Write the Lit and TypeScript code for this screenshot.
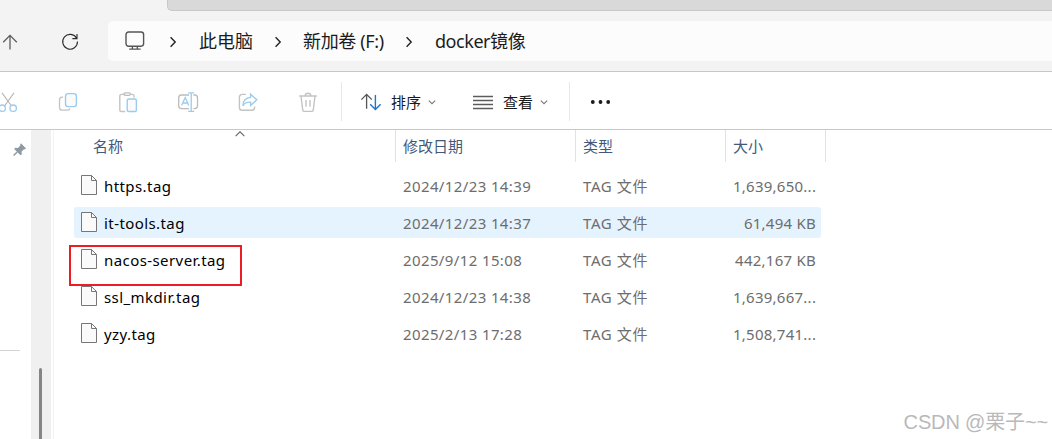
import { html, css, svg, LitElement } from 'lit'
import { customElement, property } from 'lit/decorators.js'
import { classMap } from 'lit/directives/class-map.js'

interface FileEntry {
  name: string
  date: string
  type: string
  size: string
  hover?: boolean
  marked?: boolean
}

const files: FileEntry[] = [
  { name: 'https.tag', date: '2024/12/23 14:39', type: 'TAG 文件', size: '1,639,650...' },
  { name: 'it-tools.tag', date: '2024/12/23 14:37', type: 'TAG 文件', size: '61,494 KB', hover: true },
  { name: 'nacos-server.tag', date: '2025/9/12 15:08', type: 'TAG 文件', size: '442,167 KB', marked: true },
  { name: 'ssl_mkdir.tag', date: '2024/12/23 14:38', type: 'TAG 文件', size: '1,639,667...' },
  { name: 'yzy.tag', date: '2025/2/13 17:28', type: 'TAG 文件', size: '1,508,741...' }
]

// all icons share a 20x20 box unless the component scales them
const icons: Record<string, unknown> = {
  up: svg`<path d="M10 17.5V3.5M3.2 10.2 10 3.4l6.8 6.8" stroke="#5c5c5c" stroke-width="1.3"/>`,
  refresh: svg`<path d="M16.6 7.2A7.4 7.4 0 1 0 17.5 10.6M17 3v4.6h-4.6" stroke="#2a2a2a" stroke-width="1.1"/>`,
  monitor: svg`<rect x="1" y="1" width="17.6" height="14.2" rx="2.6" stroke="#555" stroke-width="1.4"/><path d="M7.4 15.6v2.2M12.3 15.6v2.2M4.2 18.2h11.4" stroke="#555" stroke-width="1.3"/>`,
  cut: svg`<path d="M4 .8 13.2 13.6M16 .8 6.8 13.6" stroke="#bcbcbc" stroke-width="1.2"/><circle cx="4.2" cy="16.2" r="3.2" stroke="#9bcbee" stroke-width="1.3"/><circle cx="15.2" cy="16.2" r="3.2" stroke="#9bcbee" stroke-width="1.3"/>`,
  copy: svg`<path d="M5.2 5.2H4A2.8 2.8 0 0 0 1.5 8v7.4A2.8 2.8 0 0 0 4.2 18.2h5A2.8 2.8 0 0 0 12 16.4" stroke="#c4c4c4" stroke-width="1.3"/><rect x="7.5" y="1.6" width="10.9" height="13" rx="2.6" fill="#fbfbfb" stroke="#9bcbee" stroke-width="1.4"/>`,
  paste: svg`<path d="M6.5 2.4H3.4A1.6 1.6 0 0 0 1.8 4v14A1.5 1.5 0 0 0 3.3 19.5H7.2M12.4 2.4h2A1.6 1.6 0 0 1 16 4v1.6" stroke="#c4c4c4" stroke-width="1.4"/><rect x="6" y=".8" width="6.4" height="2.6" rx="1.3" stroke="#bcbcbc" stroke-width="1.2"/><rect x="9.2" y="7" width="9.2" height="12.5" rx="1.6" fill="#fbfbfb" stroke="#9bcbee" stroke-width="1.4"/>`,
  rename: svg`<path d="M11 3H3.4A2.8 2.8 0 0 0 .7 5.8v8A2.8 2.8 0 0 0 3.4 16.6H11M15.4 3h1.4a2.8 2.8 0 0 1 2.7 2.8v8a2.8 2.8 0 0 1-2.7 2.8h-1.4" stroke="#bcbcbc" stroke-width="1.3"/><path d="M13.2.8v18.6M10.2.8h6M10.2 19.3h6M3.6 13.6 7.2 5.6l3.6 8M4.8 11h4.8" stroke="#9bcbee" stroke-width="1.3"/>`,
  share: svg`<path d="M8 2.4H4.2A2.8 2.8 0 0 0 1.4 5.2v10.2a2.8 2.8 0 0 0 2.8 2.8h9.6a2.8 2.8 0 0 0 2.8-2.8v-1" stroke="#c4c4c4" stroke-width="1.4"/><path d="M12.6 2.2 18.8 7.8l-6.2 5.6v-3.2C8.6 9.9 6.4 11.3 4.9 13.8 5.1 9 7.6 5.8 12.6 5.4Z" stroke="#9bcbee" stroke-width="1.4"/>`,
  trash: svg`<path d="M1.2 4h17.6M3 4l1.7 13.8a1.8 1.8 0 0 0 1.8 1.6h7a1.8 1.8 0 0 0 1.8-1.6L17 4M7.2 3.8a2.8 2.6 0 0 1 5.6 0M8 8v6.8M12 8v6.8" stroke="#c4c4c4" stroke-width="1.4"/>`,
  sort: svg`<path d="M5.6 16.8V2.6M.4 7.6 5.6 2.4l5.2 5.2" stroke="#555" stroke-width="1.3"/><path d="M14.4 3v14.2M9.2 12.2l5.2 5.2 5.2-5.2" stroke="#1978ca" stroke-width="1.4"/>`,
  list: svg`<path d="M0 4.5h20M0 8.5h20M0 12.5h20M0 16.5h20" stroke="#5c5c5c" stroke-width="1.3"/>`,
  next: svg`<path d="M7.6 5.2 12.2 10l-4.6 4.8" stroke="#222" stroke-width="1.4"/>`,
  down: svg`<path d="M6.8 8.6 10 11.7l3.2-3.1" stroke="#7a7a7a" stroke-width="1.1"/>`,
  more: svg`<g fill="#1b1b1b"><circle cx="2.8" cy="10" r="1.9"/><circle cx="10.5" cy="10" r="1.9"/><circle cx="18.2" cy="10" r="1.9"/></g>`,
  caret: svg`<path d="M5.6 12.2 10 7.8l4.4 4.4" stroke="#666" stroke-width="1.1"/>`,
  file: svg`<path d="M2.5.5H12.5L17.5 5.5V19.5H2.5Z" fill="#fafafa" stroke="#767676"/><path d="M12.5.5V5.5H17.5" stroke="#767676"/>`,
  pin: svg`<path d="M11.2 2.6 17.6 9l-1.2 1.2-1.4-.2-3 3 .2 3.2-1.5 1.5-8-8 1.5-1.5 3.2.2 3-3-.2-1.4Z" fill="#8d99a3" transform="translate(0 -1)"/><path d="M6.6 12.4 2 17" stroke="#8d99a3" stroke-width="1.8"/>`
}

@customElement('fe-icon')
export class FeIcon extends LitElement {
  static styles = css`
    :host {
      display: block;
      flex: none;
      width: 20px;
      height: 20px;
    }

    .glyph {
      display: block;
      width: 100%;
      height: 100%;
      fill: none;
      overflow: visible;
    }
  `

  @property() name = ''

  render () {
    return html`<svg class="glyph" viewBox="0 0 20 20">${icons[this.name]}</svg>`
  }
}

@customElement('address-bar')
export class AddressBar extends LitElement {
  static styles = css`
    :host {
      display: block;
      box-sizing: border-box;
      height: 72px;
      background: #f3f3f3;
      border-bottom: 1px solid #c8c8c8;
    }

    .tab {
      box-sizing: border-box;
      height: 11px;
      margin-left: 167px;
      background: #d9d9d9;
      border: solid #c8c8c8;
      border-width: 0 0 1px 1px;
      border-bottom-left-radius: 5px;
    }

    .nav {
      display: flex;
      align-items: center;
      height: 40px;
      margin-top: 10px;
    }

    .refresh {
      margin: 0 28px 0 40px;
    }

    .path {
      display: flex;
      flex: 1;
      align-items: center;
      height: 40px;
      padding-left: 17px;
      background: #fcfcfc;
      border-radius: 5px 0 0 5px;
      color: #1b1b1b;
      font-size: 18px;
      line-height: 24px;
      white-space: nowrap;
    }

    .monitor {
      margin-bottom: 1px;
    }

    .next {
      margin: 1px 17px 0 18px;
    }

    .crumb {
      width: 54px;
      margin-left: -1px;
    }

    .drive {
      width: 81px;
      letter-spacing: -.35px;
    }

    .folder {
      letter-spacing: -.45px;
    }

    .next.tight {
      margin: 1px 15px 0;
    }

    .next.last {
      margin: 1px 16px 0 15px;
    }

    .up {
      margin-top: 1px;
    }
  `

  render () {
    return html`
      <div class="tab"></div>
      <div class="nav">
        <fe-icon class="up" name="up"></fe-icon>
        <fe-icon class="refresh" name="refresh"></fe-icon>
        <div class="path">
          <fe-icon class="monitor" name="monitor"></fe-icon>
          <fe-icon class="next" name="next"></fe-icon>
          <span class="crumb">此电脑</span>
          <fe-icon class="next tight" name="next"></fe-icon>
          <span class="drive">新加卷 (F:)</span>
          <fe-icon class="next last" name="next"></fe-icon>
          <span class="folder">docker镜像</span>
        </div>
      </div>
    `
  }
}

@customElement('command-bar')
export class CommandBar extends LitElement {
  static styles = css`
    :host {
      display: flex;
      box-sizing: border-box;
      height: 58px;
      align-items: center;
      background: #fff;
      border-bottom: 1px solid #c8c8c8;
      color: #1b1b1b;
      font-size: 15px;
      line-height: 20px;
    }

    .actions {
      display: flex;
      gap: 40px;
      margin: 3px 23px 0 -2px;
    }

    .divider {
      width: 1px;
      height: 39px;
      margin-top: 2px;
      background: #e8e8e8;
    }

    .menu {
      display: flex;
      align-items: center;
      margin: 3px 0 0 19px;
    }

    .label {
      width: 30px;
      margin: 0 1px 0 10px;
      white-space: nowrap;
    }

    .view {
      margin-left: 31px;
      margin-right: 15px;
    }

    .more {
      margin: 3px 0 0 20px;
    }
  `

  render () {
    return html`
      <div class="actions">
        ${['cut', 'copy', 'paste', 'rename', 'share', 'trash'].map(name => html`<fe-icon name="${name}"></fe-icon>`)}
      </div>
      <div class="divider"></div>
      <div class="menu">
        <fe-icon name="sort"></fe-icon>
        <span class="label">排序</span>
        <fe-icon name="down"></fe-icon>
      </div>
      <div class="menu view">
        <fe-icon name="list"></fe-icon>
        <span class="label">查看</span>
        <fe-icon name="down"></fe-icon>
      </div>
      <div class="divider"></div>
      <fe-icon class="more" name="more"></fe-icon>
    `
  }
}

@customElement('side-panel')
export class SidePanel extends LitElement {
  static styles = css`
    :host {
      display: flex;
      width: 53px;
      border-right: 1px solid #f3f3f3;
    }

    .tree {
      width: 31px;
    }

    .pin {
      width: 16px;
      height: 16px;
      margin: 12px 0 0 12px;
    }

    .rule {
      width: 20px;
      height: 1px;
      margin-top: 192px;
      background: #d4d4d4;
    }

    .track {
      display: flex;
      justify-content: center;
      width: 20px;
      background: #f0f0f0;
    }

    .thumb {
      width: 3px;
      margin: 238px 1px 0 0;
      background: #858585;
      border-radius: 2px 2px 0 0;
    }
  `

  render () {
    return html`
      <div class="tree">
        <fe-icon class="pin" name="pin"></fe-icon>
        <div class="rule"></div>
      </div>
      <div class="track"><div class="thumb"></div></div>
    `
  }
}

@customElement('file-list')
export class FileList extends LitElement {
  static styles = css`
    :host {
      display: block;
      flex: 1;
      font-size: 15px;
      line-height: 20px;
      white-space: nowrap;
    }

    .head {
      display: grid;
      grid-template-columns: 342px 180px 150px 100px;
      height: 32px;
      color: #44597a;
    }

    .col {
      position: relative;
      box-sizing: border-box;
      padding: 6px 0 0 7px;
      border-right: 1px solid #e2e2e2;
    }

    .col.name {
      padding-left: 39px;
    }

    .caret {
      position: absolute;
      top: -6px;
      left: 176px;
    }

    .rows {
      display: grid;
      gap: 6px;
      margin: 8px 0 0 20px;
      width: 747px;
    }

    .row {
      position: relative;
      display: grid;
      grid-template-columns: 30px 299px 180px 150px 83px;
      align-items: center;
      height: 31px;
      border-radius: 3px;
      color: #6d6d6d;
    }

    .row.hover {
      background: #e5f3ff;
    }

    .file {
      margin: 0 0 1px 5px;
    }

    .title {
      color: #000;
      letter-spacing: .42px;
    }

    .cell {
      letter-spacing: .38px;
    }

    .type {
      letter-spacing: .6px;
    }

    .size {
      letter-spacing: .25px;
      text-align: right;
    }

    .mark {
      position: absolute;
      left: -5px;
      top: 1px;
      box-sizing: border-box;
      width: 173px;
      height: 41px;
      border: 2px solid #ed1c24;
      z-index: 1;
    }
  `

  render () {
    return html`
      <div class="head">
        <div class="col name">名称<fe-icon class="caret" name="caret"></fe-icon></div>
        <div class="col">修改日期</div>
        <div class="col">类型</div>
        <div class="col">大小</div>
      </div>
      <div class="rows">
        ${files.map(file => html`
          <div class=${classMap({ row: true, hover: !!file.hover })}>
            <fe-icon class="file" name="file"></fe-icon>
            <span class="title">${file.name}</span>
            <span class="cell">${file.date}</span>
            <span class="cell type">${file.type}</span>
            <span class="cell size">${file.size}</span>
            ${file.marked ? html`<div class="mark"></div>` : ''}
          </div>`)}
      </div>
    `
  }
}

@customElement('app-root')
export class AppRoot extends LitElement {
  static styles = css`
    :host {
      position: relative;
      display: flex;
      flex-direction: column;
      height: 439px;
      overflow: hidden;
      background: #fff;
      font-family: "Noto Sans", "Noto Sans CJK SC", sans-serif;
    }

    .body {
      display: flex;
      flex: 1;
    }

    .watermark {
      position: absolute;
      right: 4px;
      bottom: 3px;
      color: #b9b9b9;
      font: 20px/28px "Liberation Sans", "Noto Sans CJK SC", sans-serif;
      letter-spacing: -.15px;
      white-space: nowrap;
    }
  `

  render () {
    return html`
      <address-bar></address-bar>
      <command-bar></command-bar>
      <div class="body">
        <side-panel></side-panel>
        <file-list></file-list>
      </div>
      <div class="watermark">CSDN @栗子~~</div>
    `
  }
}
